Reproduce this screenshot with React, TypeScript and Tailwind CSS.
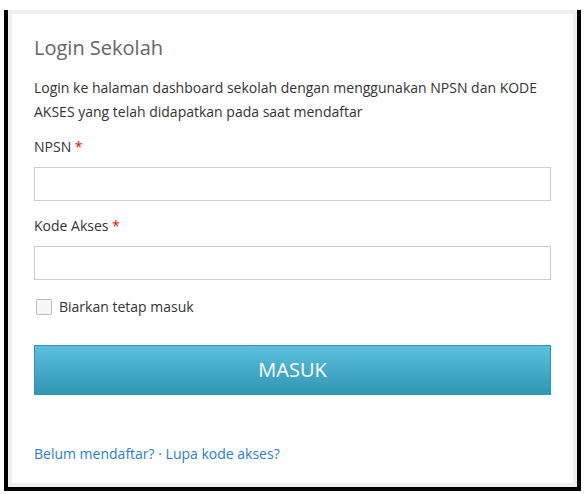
import { useState } from "react"

// Login card for school dashboard
export default function App() {
  const [remember, setRemember] = useState(false)

  return (
    <div className="w-[584px] h-[494px] bg-white pt-[10px] pl-[4px] pr-[3px] pb-[3px] font-['Open_Sans',sans-serif]">
      <div className="h-full border-l-4 border-r-4 border-b-4 border-black">
        <div className="h-full border-4 border-[#efefef] bg-white px-[22px] pt-[20px]">
          <h1 className="text-[20px] leading-[28px] text-[#666]">Login Sekolah</h1>

          <p className="mt-[14px] text-[14px] leading-[24px] text-[#333]">
            Login ke halaman dashboard sekolah dengan menggunakan NPSN dan KODE AKSES yang telah didapatkan pada saat mendaftar
          </p>

          <label className="block mt-[13px] text-[14px] leading-[20px] text-[#333]">
            NPSN <span className="text-red-600">*</span>
          </label>
          <input
            type="text"
            className="block mt-[10px] w-full h-[34px] border border-[#ccc] bg-white px-3 text-[14px] outline-none"
          />

          <label className="block mt-[15px] text-[14px] leading-[20px] text-[#333]">
            Kode Akses <span className="text-red-600">*</span>
          </label>
          <input
            type="password"
            className="block mt-[10px] w-full h-[34px] border border-[#ccc] bg-white px-3 text-[14px] outline-none"
          />

          <label className="flex items-center mt-[16px] gap-[7px] text-[14px] text-[#333] cursor-pointer">
            <input
              type="checkbox"
              checked={remember}
              onChange={() => setRemember(!remember)}
              className="appearance-none w-[16px] h-[16px] ml-[2px] border border-[#bbb] rounded-[2px] bg-[#f7f7f7]"
            />
            Biarkan tetap masuk
          </label>

          <button className="block mt-[28px] w-full h-[50px] border border-[#2f96b4] bg-gradient-to-b from-[#5bc0de] to-[#2f96b4] text-white text-[20px]">
            MASUK
          </button>

          <div className="mt-[48px] text-[14px] text-[#2a80c2]">
            <a href="#">Belum mendaftar?</a> · <a href="#">Lupa kode akses?</a>
          </div>
        </div>
      </div>
    </div>
  )
}
